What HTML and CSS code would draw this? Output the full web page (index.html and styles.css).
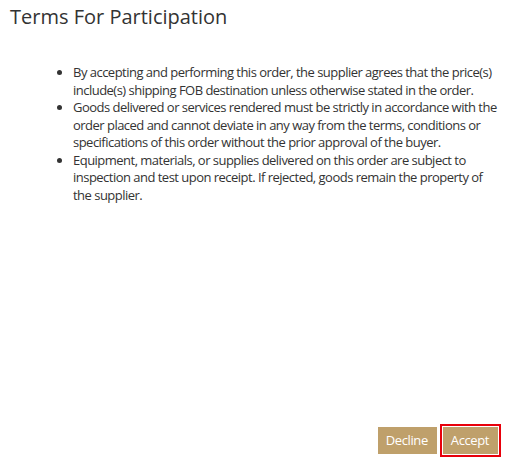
FILE: index.html
```html
<!DOCTYPE html>
<html>
<head>
<meta charset="utf-8">
<link rel="stylesheet" href="styles.css">
</head>
<body>
<div class="dialog">
  <h1 class="title">Terms For Participation</h1>
  <div class="content">
    <ul class="terms">
      <li>By accepting and performing this order, the supplier agrees that the price(s) include(s) shipping FOB destination unless otherwise stated in the order.</li>
      <li>Goods delivered or services rendered must be strictly in accordance with the order placed and cannot deviate in any way from the terms, conditions or specifications of this order without the prior approval of the buyer.</li>
      <li>Equipment, materials, or supplies delivered on this order are subject to inspection and test upon receipt. If rejected, goods remain the property of the supplier.</li>
    </ul>
  </div>
  <div class="actions">
    <button class="btn">Decline</button>
    <button class="btn btn-focus">Accept</button>
  </div>
</div>
</body>
</html>
```
FILE: styles.css
```css
html, body {
  margin: 0;
  padding: 0;
  background: #fff;
}
body {
  font-family: "Open Sans", "Noto Sans", sans-serif;
  color: #333;
}
.dialog {
  height: 468px;
  display: flex;
  flex-direction: column;
  box-sizing: border-box;
}
.title {
  margin: 0;
  padding: 3px 10px 0;
  font-size: 20px;
  font-weight: 400;
  line-height: 28px;
  color: #333;
}
.content {
  flex: 1;
  padding: 33px 6px 0 53px;
}
.terms {
  margin: 0;
  padding: 0 0 0 20px;
  font-size: 13px;
  line-height: 17.5px;
  letter-spacing: -0.52px;
  color: #333;
}
.actions {
  display: flex;
  justify-content: flex-end;
  gap: 6px;
  padding: 0 10px 14px 0;
  align-items: center;
}
.btn {
  font-family: inherit;
  font-size: 13px;
  letter-spacing: -0.4px;
  background: #bfa06b;
  color: #fff;
  border: 0;
  padding: 0 9px 0 8px;
  height: 27px;
  line-height: 27px;
}
.btn-focus {
  outline: 2px solid #e8000b;
  outline-offset: 1px;
}
```
